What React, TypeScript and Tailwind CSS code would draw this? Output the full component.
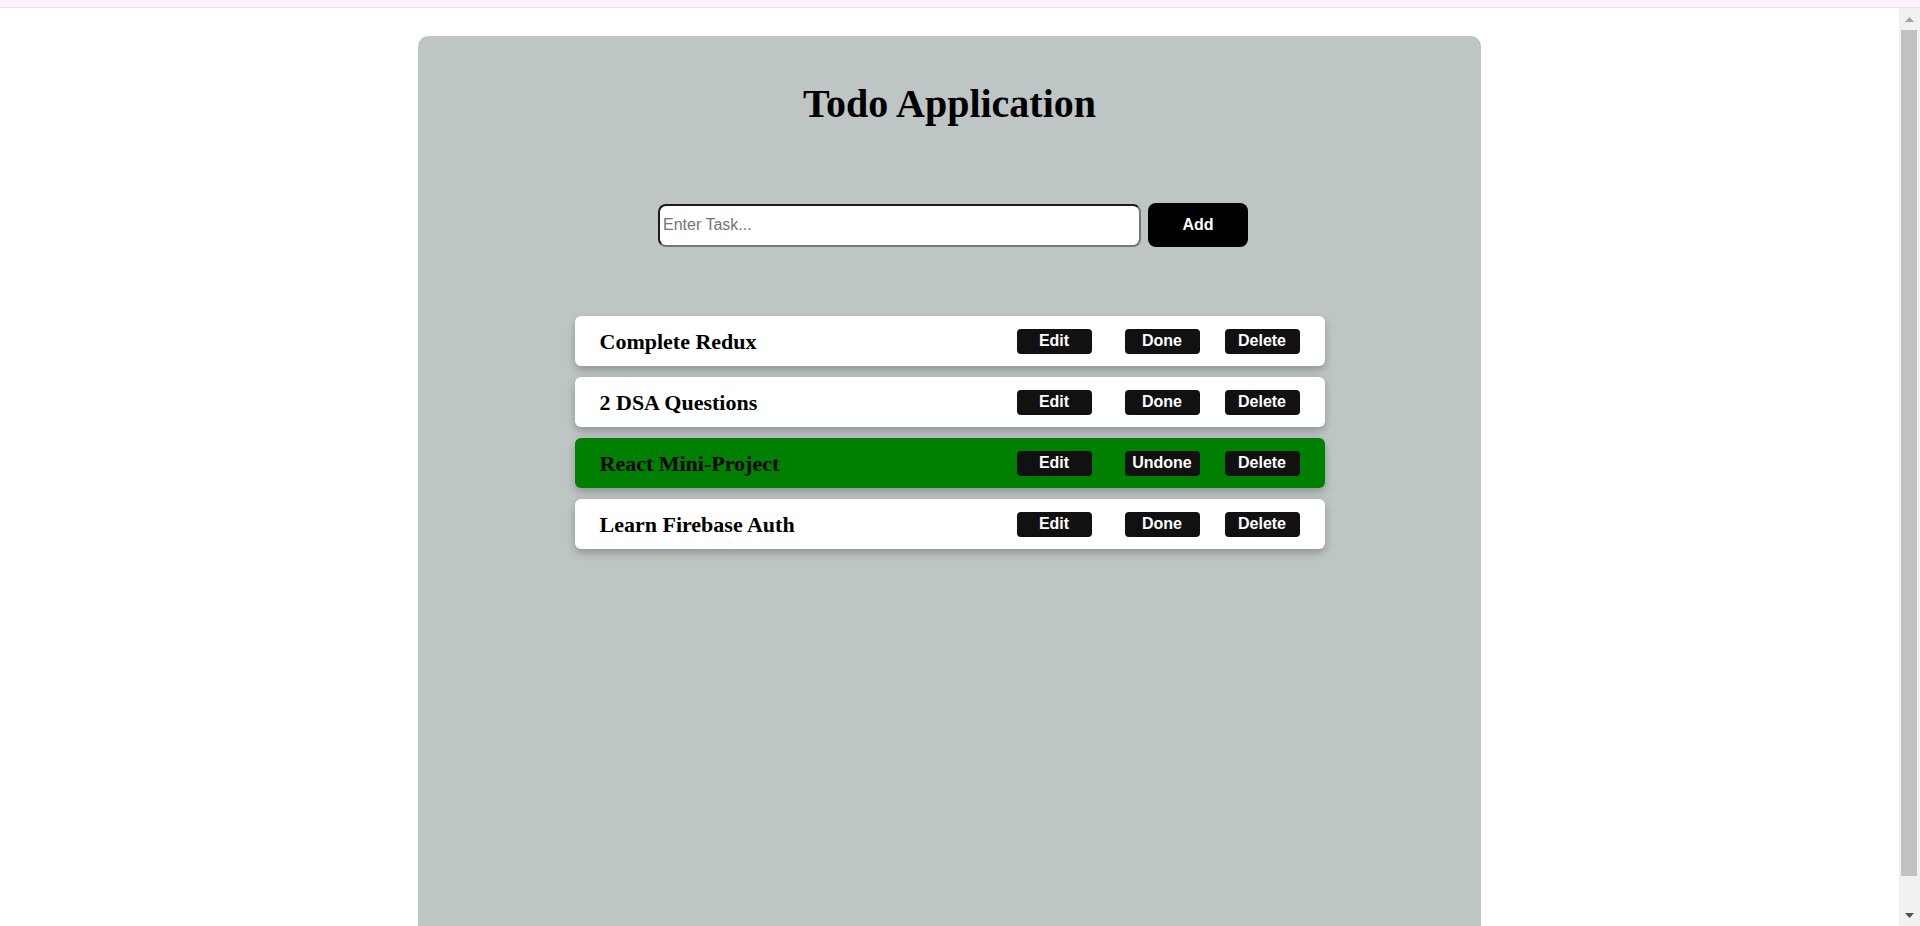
import { useState } from 'react';

type Todo = { id: number; text: string; done: boolean };

const initialTodos: Todo[] = [
  { id: 1, text: 'Complete Redux', done: false },
  { id: 2, text: '2 DSA Questions', done: false },
  { id: 3, text: 'React Mini-Project', done: true },
  { id: 4, text: 'Learn Firebase Auth', done: false },
];

function TodoRow({ todo }: { todo: Todo }) {
  return (
    <div
      className={`flex items-center h-[50px] w-[750px] px-[25px] rounded-md shadow-[0_4px_8px_rgba(0,0,0,0.25)] ${
        todo.done ? 'bg-[#008000]' : 'bg-white'
      }`}
    >
      <span className="flex-1 text-[22px] font-bold text-black font-['Liberation_Serif',serif]">{todo.text}</span>
      <button className="w-[75px] h-[25px] rounded bg-[#111111] text-white text-[16px] font-bold">Edit</button>
      <button className="ml-[33px] w-[75px] h-[25px] rounded bg-[#111111] text-white text-[16px] font-bold">
        {todo.done ? 'Undone' : 'Done'}
      </button>
      <button className="ml-[25px] w-[75px] h-[25px] rounded bg-[#111111] text-white text-[16px] font-bold">Delete</button>
    </div>
  );
}

export default function App() {
  const [task, setTask] = useState('');

  return (
    <div className="h-[926px] flex flex-col overflow-hidden bg-white font-['Liberation_Sans',Arial,sans-serif]">
      <div className="h-[8px] shrink-0 bg-[#fdf5fe] border-b border-[#ebe1f0]" />

      <div className="flex flex-1 min-h-0">
        <main className="flex-1 flex justify-center pt-[28px]">
          <div className="w-[1063px] h-full rounded-t-[10px] bg-[#bec6c5] flex flex-col items-center pt-[45px]">
            <h1 className="text-[40px] leading-[45px] font-bold text-black font-['Liberation_Serif',serif]">
              Todo Application
            </h1>

            <div className="flex items-center gap-[7px] mt-[77px] ml-[7px]">
              <input
                value={task}
                onChange={(e) => setTask(e.target.value)}
                placeholder="Enter Task..."
                className="w-[483px] h-[43px] pl-[3px] bg-white rounded-lg border-2 border-t-[#1b1b1b] border-l-[#1b1b1b] border-b-[#767676] border-r-[#767676] text-[16px] text-black placeholder:text-[#757575] outline-none"
              />
              <button className="w-[100px] h-[44px] rounded-lg bg-black text-white text-[16px] font-bold">Add</button>
            </div>

            <div className="flex flex-col gap-[11px] mt-[69px]">
              {initialTodos.map((t) => (
                <TodoRow key={t.id} todo={t} />
              ))}
            </div>
          </div>
        </main>

        <div className="w-[21px] shrink-0 bg-[#f1f1f1] flex flex-col items-center">
          <div className="h-[22px] w-full flex items-center justify-center">
            <svg width="9" height="5" viewBox="0 0 9 5">
              <path d="M0 5 L4.5 0 L9 5 Z" fill="#a3a3a3" />
            </svg>
          </div>
          <div className="flex-1 w-full pl-[2px] pr-[3px]">
            <div className="h-[846px] bg-[#c1c1c1]" />
          </div>
          <div className="h-[22px] w-full flex items-center justify-center">
            <svg width="9" height="5" viewBox="0 0 9 5">
              <path d="M0 0 L9 0 L4.5 5 Z" fill="#505050" />
            </svg>
          </div>
        </div>
      </div>
    </div>
  );
}
